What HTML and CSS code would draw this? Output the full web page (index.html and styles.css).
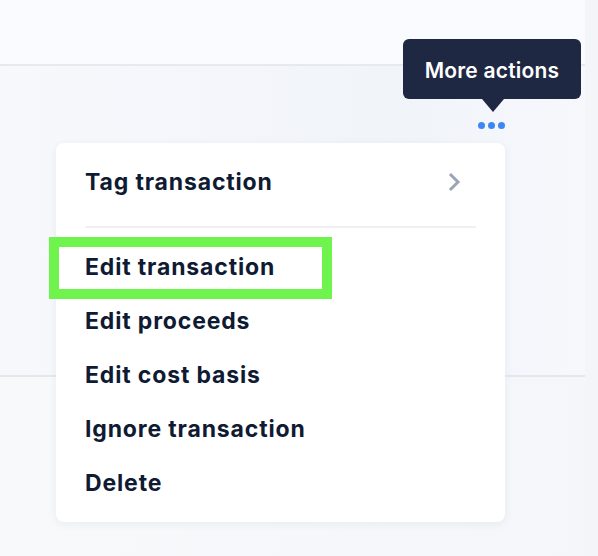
FILE: index.html
```html
<!DOCTYPE html>
<html lang="en">
<head>
    <meta charset="UTF-8">
    <meta name="viewport" content="width=device-width, initial-scale=1.0">
    <title>Transactions</title>
    <link rel="stylesheet" href="styles.css">
</head>
<body>
    <div class="page">
        <main class="content">
            <div class="topbar"></div>
            <div class="row">
                <div class="actions">
                    <!-- Tooltip over the menu trigger -->
                    <div class="tooltip">More actions</div>
                    <button class="dots" aria-label="More actions">
                        <span></span><span></span><span></span>
                    </button>
                </div>
            </div>
            <div class="rest"></div>

            <!-- Dropdown menu -->
            <div class="menu">
                <div class="menu-item has-sub">
                    <span>Tag transaction</span>
                    <svg class="chevron" width="14" height="20" viewBox="0 0 14 20">
                        <path d="M3 3 L10 10 L3 17" fill="none" stroke="#9aa5b8" stroke-width="3" stroke-linecap="square"/>
                    </svg>
                </div>
                <div class="divider"></div>
                <div class="menu-item">Edit transaction</div>
                <div class="menu-item">Edit proceeds</div>
                <div class="menu-item">Edit cost basis</div>
                <div class="menu-item">Ignore transaction</div>
                <div class="menu-item">Delete</div>
            </div>

            <!-- Highlight box -->
            <div class="highlight"></div>
        </main>
        <aside class="sidebar"></aside>
    </div>
</body>
</html>
```

FILE: styles.css
```css
/* General Styling */
body {
    margin: 0;
    padding: 0;
    font-family: "Inter", "Liberation Sans", sans-serif;
    background: #f9fbfe;
    color: #0f1a33;
}

.page {
    display: flex;
    height: 556px;
    overflow: hidden;
}

.content {
    flex: 1;
    position: relative;
    display: flex;
    flex-direction: column;
}

.sidebar {
    width: 13px;
    background: #f3f5f9;
}

/* Background rows */
.topbar {
    height: 64px;
    border-bottom: 2px solid #e6e9ef;
    background: #f9fbfe;
}

.row {
    height: 309px;
    border-bottom: 2px solid #e4e8ee;
    background: linear-gradient(to right, #f6f8fc, #f1f4f9 70%, #f6f8fc);
    position: relative;
}

.rest {
    flex: 1;
    background: linear-gradient(to right, #f8f9fb, #f5f6f9);
}

/* Trigger + tooltip */
.actions {
    position: absolute;
    left: 403px;
    top: -27px;
    width: 178px;
}

.tooltip {
    background: #1e2842;
    color: #fff;
    font-size: 21px;
    font-weight: 600;
    height: 60px;
    line-height: 64px;
    letter-spacing: 0.2px;
    text-align: center;
    border-radius: 6px;
    position: relative;
}

.tooltip::after {
    content: "";
    position: absolute;
    left: 79px;
    bottom: -13px;
    border-left: 11px solid transparent;
    border-right: 11px solid transparent;
    border-top: 13px solid #1e2842;
}

.dots {
    display: flex;
    gap: 3px;
    margin: 23px 0 0 75px;
    padding: 0;
    border: none;
    background: none;
}

.dots span {
    width: 7px;
    height: 7px;
    border-radius: 50%;
    background: #3d86f5;
}

/* Menu */
.menu {
    position: absolute;
    left: 56px;
    top: 143px;
    width: 449px;
    height: 379px;
    box-sizing: border-box;
    padding: 12px 29px 0;
    background: #fff;
    border-radius: 8px;
    box-shadow: 0 2px 10px rgba(20, 30, 60, 0.06);
}

.menu-item {
    font-size: 23px;
    font-weight: 700;
    letter-spacing: 0.85px;
    height: 54px;
    line-height: 54px;
}

.has-sub {
    display: flex;
    justify-content: space-between;
    align-items: center;
}

.chevron {
    margin-right: 14px;
}

.divider {
    height: 2px;
    background: #eef0f4;
    margin: 17px 0 12px;
}

.highlight {
    position: absolute;
    left: 49px;
    top: 237px;
    width: 263px;
    height: 42px;
    border: 10px solid #6ef44c;
}
```
